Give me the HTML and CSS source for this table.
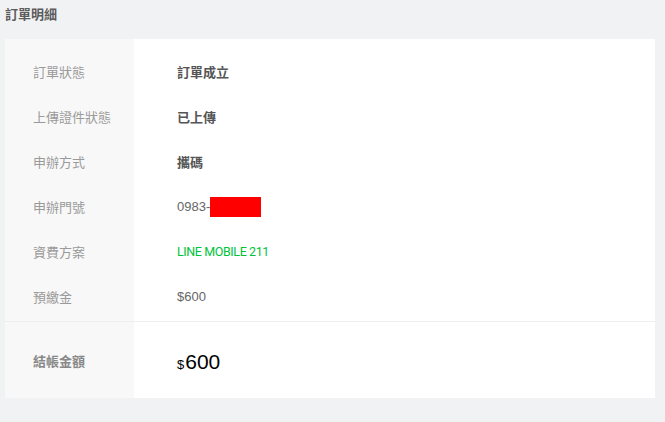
FILE: index.html
```html
<!DOCTYPE html>
<html lang="zh-Hant">
<head>
   <meta charset="UTF-8">
   <meta name="viewport" content="width=device-width, initial-scale=1.0">
   <title>訂單明細</title>
   <link rel="stylesheet" href="styles.css">
</head>
<body>
   <h2 class="page-title">訂單明細</h2>
   <div class="order-card">
       <div class="order-section">
           <div class="label-col">
               <div class="cell">訂單狀態</div>
               <div class="cell">上傳證件狀態</div>
               <div class="cell">申辦方式</div>
               <div class="cell">申辦門號</div>
               <div class="cell">資費方案</div>
               <div class="cell">預繳金</div>
           </div>
           <div class="value-col">
               <div class="cell strong">訂單成立</div>
               <div class="cell strong">已上傳</div>
               <div class="cell strong">攜碼</div>
               <div class="cell">0983-<span class="masked"></span></div>
               <div class="cell plan">LINE MOBILE 211</div>
               <div class="cell">$600</div>
           </div>
       </div>
       <div class="order-section total">
           <div class="label-col">
               <div class="cell total-label">結帳金額</div>
           </div>
           <div class="value-col">
               <div class="cell total-value"><span class="currency">$</span>600</div>
           </div>
       </div>
   </div>
</body>
</html>
```

FILE: styles.css
```css
body {
    margin: 0;
    padding: 0 10px 24px 5px;
    background-color: #f1f2f4;
    font-family: "Liberation Sans", "Noto Sans CJK TC", sans-serif;
    color: #555;
}

.page-title {
    margin: 0;
    padding: 6px 0 0;
    height: 33px;
    font-size: 13px;
    font-weight: bold;
    line-height: 18px;
    color: #5c5c5c;
}

.order-card {
    background: #fff;
}

.order-section {
    display: flex;
    border-bottom: 1px solid #eeeeee;
}

.order-section.total {
    border-bottom: none;
}

.label-col {
    width: 129px;
    flex: none;
    background: #f8f8f8;
    padding: 10px 0 2px 28px;
    box-sizing: border-box;
}

.value-col {
    flex: 1;
    padding: 10px 0 2px 43px;
}

.total .label-col,
.total .value-col {
    padding-top: 0;
    padding-bottom: 0;
}

.cell {
    height: 45px;
    display: flex;
    align-items: center;
    font-size: 13px;
}

.label-col .cell {
    color: #9a9a9a;
}

.value-col .cell {
    color: #666;
}

.value-col .strong {
    font-weight: bold;
    color: #555;
}

.plan {
    font-family: Roboto, "Liberation Sans", sans-serif;
    font-size: 12.5px;
    letter-spacing: -0.4px;
}

.value-col .plan {
    color: #00c33a;
}

.masked {
    display: inline-block;
    width: 51px;
    height: 20px;
    background: #ff0000;
}

.total .cell {
    height: 76px;
}

.label-col .total-label {
    font-weight: bold;
    color: #888;
}

.value-col .total-value {
    font-size: 21px;
    color: #000;
    align-items: baseline;
    padding-top: 28px;
    box-sizing: border-box;
}

.currency {
    font-size: 13px;
    margin-right: 1px;
}
```
